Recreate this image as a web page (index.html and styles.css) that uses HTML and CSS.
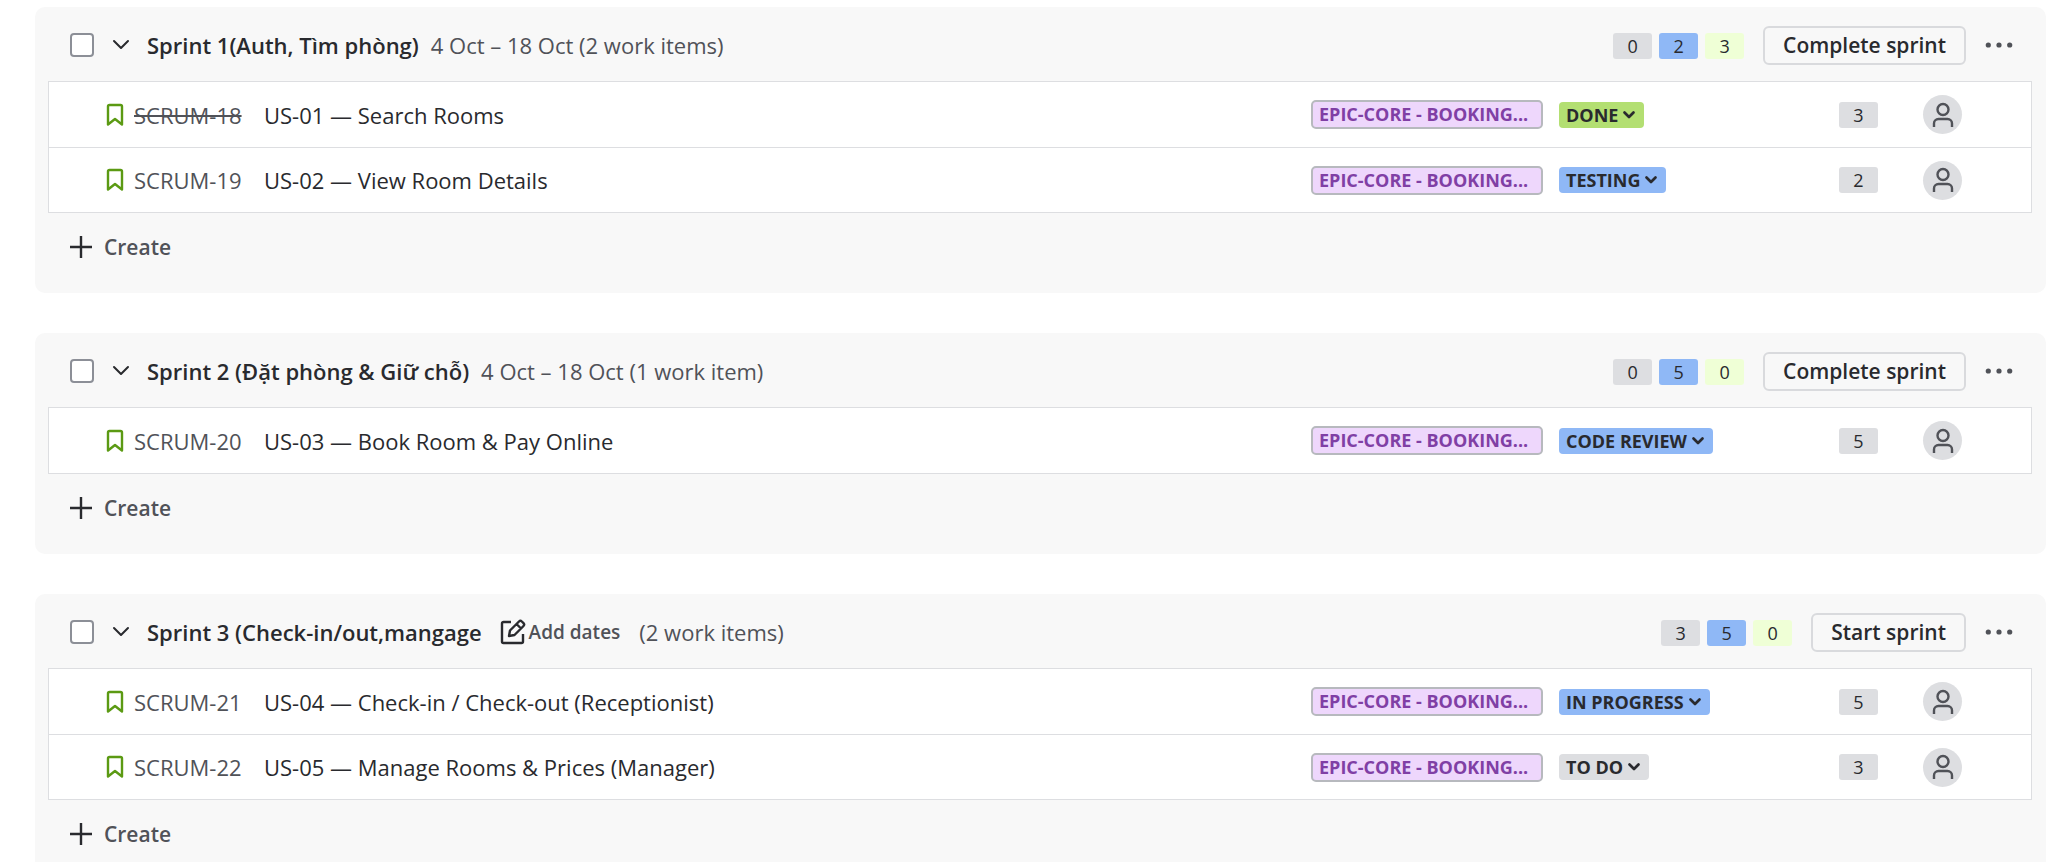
FILE: index.html
```html
<!DOCTYPE html>
<html lang="en">
<head>
<meta charset="utf-8">
<title>Backlog</title>
<link rel="stylesheet" href="styles.css">
</head>
<body>
<svg class="sprite" aria-hidden="true">
  <symbol id="chevron" viewBox="0 0 18 12"><path d="M2 2l7 7 7-7" fill="none" stroke="currentColor" stroke-width="2" stroke-linecap="round" stroke-linejoin="round"/></symbol>
  <symbol id="chevron-bold" viewBox="0 0 14 10"><path d="M2.500 2.500L7 7l4.500-4.500" fill="none" stroke="currentColor" stroke-width="2.700" stroke-linecap="round" stroke-linejoin="round"/></symbol>
  <symbol id="story" viewBox="0 0 18 24"><path d="M2 21.500V3.500A1.500 1.500 0 0 1 3.500 2h11A1.500 1.500 0 0 1 16 3.500v18l-7-5.500z" fill="none" stroke="currentColor" stroke-width="2.400" stroke-linejoin="round"/></symbol>
  <symbol id="plus" viewBox="0 0 24 24"><path d="M12 1v22M1 12h22" fill="none" stroke="currentColor" stroke-width="2.400"/></symbol>
  <symbol id="more" viewBox="0 0 28 8"><g fill="currentColor"><circle cx="3.300" cy="4" r="2.600"/><circle cx="14" cy="4" r="2.600"/><circle cx="24.700" cy="4" r="2.600"/></g></symbol>
  <symbol id="person" viewBox="0 0 24 28"><g fill="none" stroke="currentColor" stroke-width="2.400"><circle cx="12" cy="8.500" r="5.500"/><path d="M3 26v-3.500a4.500 4.500 0 0 1 4.500-4.500h9a4.500 4.500 0 0 1 4.500 4.500V26"/></g></symbol>
  <symbol id="edit" viewBox="0 0 26 26"><g fill="none" stroke="currentColor" stroke-width="2.400" stroke-linejoin="round"><path d="M11 3H3.500A1.500 1.500 0 0 0 2 4.500v18A1.500 1.500 0 0 0 3.500 24h18a1.500 1.500 0 0 0 1.500-1.500V15"/><path d="M9 17l1-5.500 9-9a2 2 0 0 1 2.800 0l1.700 1.700a2 2 0 0 1 0 2.800l-9 9zM16.500 5l4.500 4.500"/></g></symbol>
</svg>
<main class="backlog">

  <section class="sprint">
    <header class="sprint-head">
      <input class="check" type="checkbox" aria-label="Select all in Sprint 1">
      <button class="icon-btn toggle" type="button" aria-label="Collapse"><svg class="i-chevron"><use href="#chevron"/></svg></button>
      <h2 class="name">Sprint 1(Auth, Tìm phòng)</h2>
      <span class="meta">4 Oct – 18 Oct (2 work items)</span>
      <div class="actions">
        <div class="counts"><span class="pill">0</span><span class="pill blue">2</span><span class="pill lime">3</span></div>
        <button class="main-btn" type="button">Complete sprint</button>
        <button class="icon-btn" type="button" aria-label="More"><svg class="i-more"><use href="#more"/></svg></button>
      </div>
    </header>
    <ul class="items">
      <li class="item">
        <svg class="i-story"><use href="#story"/></svg><a class="key closed" href="#">SCRUM-18</a><span class="summary">US-01 — Search Rooms</span>
        <button class="epic" type="button">EPIC-CORE - BOOKING...</button>
        <div class="status-cell"><button class="status done" type="button">DONE<svg class="i-small"><use href="#chevron-bold"/></svg></button></div>
        <span class="pill">3</span>
        <button class="avatar" type="button" aria-label="Unassigned"><svg class="i-person"><use href="#person"/></svg></button>
      </li>
      <li class="item">
        <svg class="i-story"><use href="#story"/></svg><a class="key" href="#">SCRUM-19</a><span class="summary">US-02 — View Room Details</span>
        <button class="epic" type="button">EPIC-CORE - BOOKING...</button>
        <div class="status-cell"><button class="status active" type="button">TESTING<svg class="i-small"><use href="#chevron-bold"/></svg></button></div>
        <span class="pill">2</span>
        <button class="avatar" type="button" aria-label="Unassigned"><svg class="i-person"><use href="#person"/></svg></button>
      </li>
    </ul>
    <button class="create" type="button"><svg class="i-plus"><use href="#plus"/></svg>Create</button>
  </section>

  <section class="sprint">
    <header class="sprint-head">
      <input class="check" type="checkbox" aria-label="Select all in Sprint 2">
      <button class="icon-btn toggle" type="button" aria-label="Collapse"><svg class="i-chevron"><use href="#chevron"/></svg></button>
      <h2 class="name">Sprint 2 (Đặt phòng &amp; Giữ chỗ)</h2>
      <span class="meta">4 Oct – 18 Oct (1 work item)</span>
      <div class="actions">
        <div class="counts"><span class="pill">0</span><span class="pill blue">5</span><span class="pill lime">0</span></div>
        <button class="main-btn" type="button">Complete sprint</button>
        <button class="icon-btn" type="button" aria-label="More"><svg class="i-more"><use href="#more"/></svg></button>
      </div>
    </header>
    <ul class="items">
      <li class="item">
        <svg class="i-story"><use href="#story"/></svg><a class="key" href="#">SCRUM-20</a><span class="summary">US-03 — Book Room &amp; Pay Online</span>
        <button class="epic" type="button">EPIC-CORE - BOOKING...</button>
        <div class="status-cell"><button class="status active" type="button">CODE REVIEW<svg class="i-small"><use href="#chevron-bold"/></svg></button></div>
        <span class="pill">5</span>
        <button class="avatar" type="button" aria-label="Unassigned"><svg class="i-person"><use href="#person"/></svg></button>
      </li>
    </ul>
    <button class="create" type="button"><svg class="i-plus"><use href="#plus"/></svg>Create</button>
  </section>

  <section class="sprint">
    <header class="sprint-head">
      <input class="check" type="checkbox" aria-label="Select all in Sprint 3">
      <button class="icon-btn toggle" type="button" aria-label="Collapse"><svg class="i-chevron"><use href="#chevron"/></svg></button>
      <h2 class="name">Sprint 3 (Check-in/out,mangage</h2>
      <button class="dates" type="button"><svg class="i-edit"><use href="#edit"/></svg>Add dates</button>
      <span class="meta">(2 work items)</span>
      <div class="actions">
        <div class="counts"><span class="pill">3</span><span class="pill blue">5</span><span class="pill lime">0</span></div>
        <button class="main-btn" type="button">Start sprint</button>
        <button class="icon-btn" type="button" aria-label="More"><svg class="i-more"><use href="#more"/></svg></button>
      </div>
    </header>
    <ul class="items">
      <li class="item">
        <svg class="i-story"><use href="#story"/></svg><a class="key" href="#">SCRUM-21</a><span class="summary">US-04 — Check-in / Check-out (Receptionist)</span>
        <button class="epic" type="button">EPIC-CORE - BOOKING...</button>
        <div class="status-cell"><button class="status active" type="button">IN PROGRESS<svg class="i-small"><use href="#chevron-bold"/></svg></button></div>
        <span class="pill">5</span>
        <button class="avatar" type="button" aria-label="Unassigned"><svg class="i-person"><use href="#person"/></svg></button>
      </li>
      <li class="item">
        <svg class="i-story"><use href="#story"/></svg><a class="key" href="#">SCRUM-22</a><span class="summary">US-05 — Manage Rooms &amp; Prices (Manager)</span>
        <button class="epic" type="button">EPIC-CORE - BOOKING...</button>
        <div class="status-cell"><button class="status" type="button">TO DO<svg class="i-small"><use href="#chevron-bold"/></svg></button></div>
        <span class="pill">3</span>
        <button class="avatar" type="button" aria-label="Unassigned"><svg class="i-person"><use href="#person"/></svg></button>
      </li>
    </ul>
    <button class="create" type="button"><svg class="i-plus"><use href="#plus"/></svg>Create</button>
  </section>

</main>
</body>
</html>
```

FILE: styles.css
```css
* { box-sizing: border-box; }

html { overflow: hidden; background: #fff; }

body {
  margin: 0;
  font-family: "Segoe UI", "Open Sans", "Noto Sans", sans-serif;
  font-size: 22px;
  line-height: 28px;
  color: #292a2e;
}

button {
  margin: 0;
  padding: 0;
  border: 0;
  background: none;
  color: inherit;
  font: inherit;
  white-space: nowrap;
  cursor: pointer;
}

svg { display: block; flex: none; }
.sprite { display: none; }

.backlog {
  display: flex;
  flex-direction: column;
  gap: 40px;
  padding: 7px 2px 0 35px;
}

.sprint {
  padding: 0 14px 0 13px;
  border-radius: 10px;
  background: #f8f8f8;
}

.sprint-head {
  display: flex;
  align-items: center;
  height: 74px;
  padding: 2px 19px 0 22px;
}

.check {
  appearance: none;
  flex: none;
  width: 24px;
  height: 24px;
  margin: 0;
  border: 2px solid #8c8f97;
  border-radius: 4px;
  background: #fff;
}

.icon-btn { display: flex; align-items: center; }
.toggle { margin: 0 17px 0 18px; }

.name {
  margin: 0;
  font-size: 22px;
  font-weight: 600;
}

.meta { margin-left: 12px; color: #505258; }

.dates {
  display: flex;
  align-items: center;
  gap: 3px;
  margin: 0 7px 0 18px;
  font-size: 19px;
  font-weight: 600;
  color: #505258;
}

.actions {
  display: flex;
  align-items: center;
  gap: 19px;
  margin-left: auto;
}

.counts { display: flex; gap: 7px; padding-top: 2px; }

.pill {
  width: 39px;
  height: 26px;
  border-radius: 3px;
  background: #dddee1;
  font-size: 18px;
  line-height: 26px;
  text-align: center;
}
.pill.blue { background: #8fb8f6; }
.pill.lime { background: #efffd6; }

.main-btn {
  height: 39px;
  padding: 0 18px;
  border: 2px solid #d9dadd;
  border-radius: 6px;
  font-size: 21px;
  font-weight: 600;
}

.items {
  margin: 0;
  padding: 0;
  list-style: none;
  border: 1px solid #dddee1;
  background: #fff;
}

.item {
  display: grid;
  grid-template-columns: 18px 140px minmax(0, 1fr) 232px 296px 39px 84px;
  align-items: center;
  height: 65px;
  padding: 0 69px 0 57px;
}
.item + .item { border-top: 1px solid #dddee1; }

.key {
  margin-left: 10px;
  color: #505258;
  text-decoration: none;
  white-space: nowrap;
}
.key.closed { text-decoration: line-through; }
.summary { white-space: nowrap; }

.epic {
  height: 29px;
  padding: 0 6px;
  border: 2px solid #b7b9be;
  border-radius: 5px;
  background: #eed7fc;
  font-size: 18px;
  font-weight: 700;
  line-height: 25px;
  text-align: left;
  color: #803fa5;
}

.status-cell { padding-left: 16px; }

.status {
  display: flex;
  align-items: center;
  gap: 4px;
  height: 26px;
  padding: 0 8px 0 7px;
  border-radius: 4px;
  background: #dddee1;
  font-size: 18px;
  font-weight: 700;
  line-height: 26px;
}
.status.done { background: #b3df72; }
.status.active { background: #8fb8f6; }

.avatar {
  display: flex;
  align-items: center;
  justify-content: center;
  justify-self: end;
  width: 39px;
  height: 39px;
  border-radius: 50%;
  background: #dddee1;
  color: #505258;
}

.create {
  display: flex;
  align-items: center;
  gap: 11px;
  height: 80px;
  padding: 0 0 12px 21px;
  font-size: 21px;
  font-weight: 600;
  color: #505258;
}

.i-chevron { width: 18px; height: 12px; }
.i-small { width: 14px; height: 10px; }
.i-story { width: 18px; height: 24px; color: #5b9a13; }
.i-plus { width: 24px; height: 24px; color: #292a2e; }
.i-more { width: 28px; height: 8px; color: #505258; }
.i-person { width: 24px; height: 28px; }
.i-edit { width: 26px; height: 26px; color: #292a2e; }
```
